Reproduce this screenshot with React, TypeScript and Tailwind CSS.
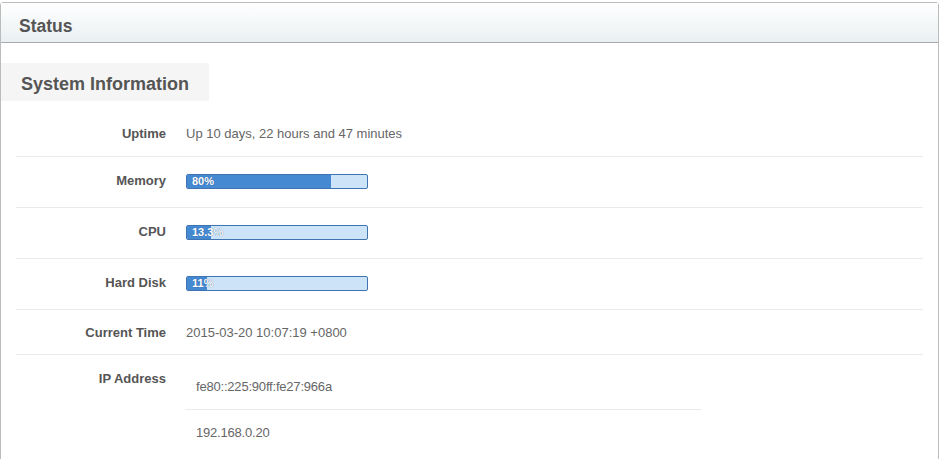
import React from 'react';

const bars = [
    { label: 'Memory', value: 80, text: '80%' },
    { label: 'CPU', value: 13.3, text: '13.3%' },
    { label: 'Hard Disk', value: 11, text: '11%' },
];

const Progress: React.FC<{ value: number; text: string }> = ({ value, text }) => (
    <div className="relative w-[182px] h-[15px] rounded-[2px] border border-[#3f74b3] bg-[#cde4f8] overflow-hidden">
        <div className="h-full bg-[#4589d3]" style={{ width: `${value}%` }}></div>
        <span className="absolute left-[5px] top-0 leading-[13px] text-[11px] text-white font-bold [text-shadow:0_0_1px_#2a5a90]">{text}</span>
    </div>
);

export default function App() {
    return (
        <div className="w-[942px] h-[459px] overflow-hidden bg-white font-['Liberation_Sans',Arial,sans-serif]">
            <div className="mt-[2px] w-[939px] h-[470px] border border-[#bcbcbc] rounded-t-[3px]">
                <div className="h-[40px] flex items-center pl-[18px] pt-[7px] border-b border-[#a9a9a9] bg-gradient-to-b from-white to-[#eaf0f2]">
                    <h2 className="text-[17.5px] font-bold text-[#555]">Status</h2>
                </div>

                <div className="pt-[20px]">
                    <div className="w-[208px] h-[38px] flex items-center pl-[20px] pt-[4px] bg-[#f5f5f5]">
                        <h3 className="text-[18px] font-bold text-[#555]">System Information</h3>
                    </div>

                    <div className="mx-[15px] mt-[9px] text-[13px]">
                        <div className="flex items-center h-[47px] pt-[1px] border-b border-[#ebebeb]">
                            <span className="w-[150px] text-right font-bold text-[#555]">Uptime</span>
                            <span className="ml-[20px] text-[#666]">Up 10 days, 22 hours and 47 minutes</span>
                        </div>

                        {bars.map(bar => (
                            <div key={bar.label} className="flex items-center h-[51px] pb-[3px] border-b border-[#ebebeb]">
                                <span className="w-[150px] text-right font-bold text-[#555]">{bar.label}</span>
                                <div className="ml-[20px] mt-[1px]">
                                    <Progress value={bar.value} text={bar.text} />
                                </div>
                            </div>
                        ))}

                        <div className="flex items-center h-[45px] pt-[1px] border-b border-[#ebebeb]">
                            <span className="w-[150px] text-right font-bold text-[#555]">Current Time</span>
                            <span className="ml-[20px] text-[#666]">2015-03-20 10:07:19 +0800</span>
                        </div>

                        <div className="flex items-start">
                            <span className="w-[150px] text-right font-bold text-[#555] pt-[14px]">IP Address</span>
                            <div className="ml-[19px] w-[516px] text-[#666]">
                                <div className="h-[55px] flex items-center pl-[11px] pt-[10px] border-b border-[#ebebeb] tracking-[-0.2px]">fe80::225:90ff:fe27:966a</div>
                                <div className="h-[45px] flex items-center pl-[11px] tracking-[-0.2px]">192.168.0.20</div>
                            </div>
                        </div>
                    </div>
                </div>
            </div>
        </div>
    );
}
